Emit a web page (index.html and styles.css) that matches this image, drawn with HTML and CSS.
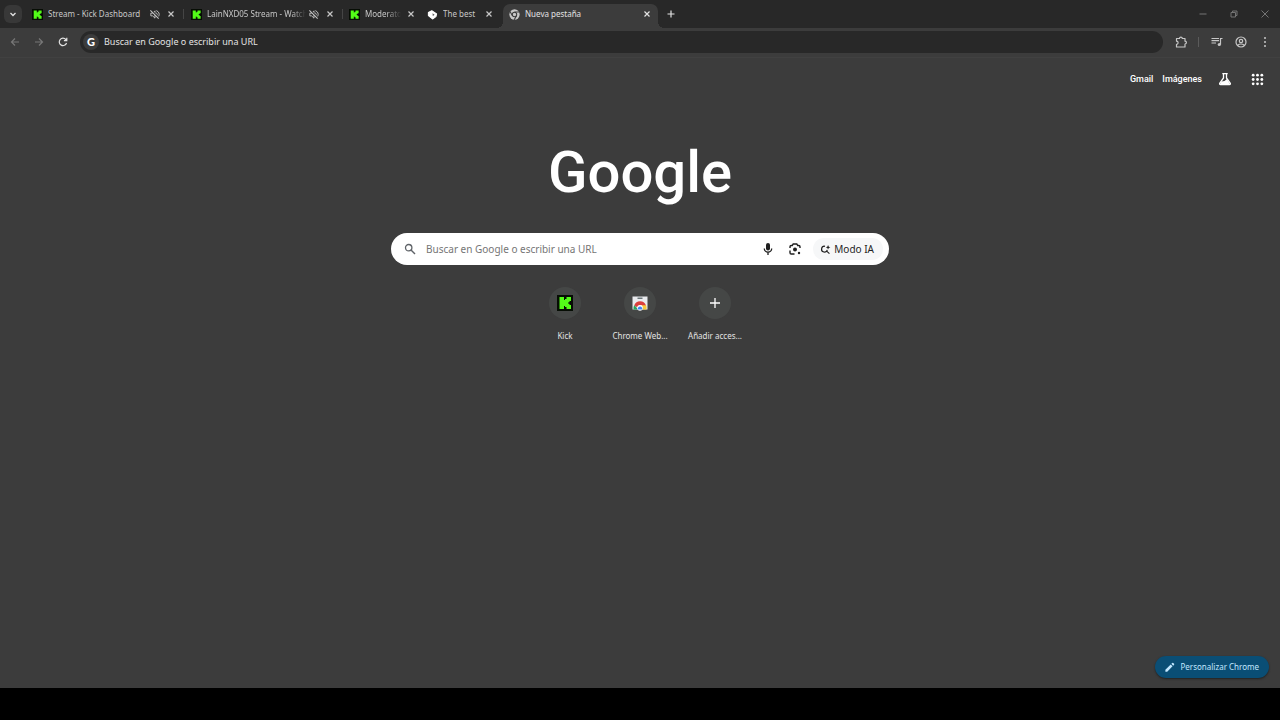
FILE: index.html
```html
<!DOCTYPE html>
<html lang="es">
<head>
<meta charset="utf-8">
<title>Nueva pestaña</title>
<link rel="stylesheet" href="styles.css">
</head>
<body>
<svg class="defs" aria-hidden="true">
  <symbol id="kick" viewBox="0 0 16 16"><path fill="#060d04" d="M0 0h16v16H0z"/><path fill="#53fc18" d="M2.500 2H7v3h1V4h1.500V2H14v4h-1.500v1.200H11.300v1.600h1.200V10H14v4H9.500v-2H8v-1H7v3H2.500z"/></symbol>
  <symbol id="close" viewBox="0 0 10 10"><path d="M2.500 2.500l5 5M7.500 2.500l-5 5" fill="none" stroke="currentColor" stroke-width="1.200"/></symbol>
  <symbol id="muted" viewBox="0 0 24 24"><path d="M4 9h4l5-5v16l-5-5H4z" fill="none" stroke="currentColor" stroke-width="2"/><path d="M16 8q4 4 0 8M16 3.500q9 4 5 13" fill="none" stroke="currentColor" stroke-width="2"/><path d="M4 2l18 18" stroke="#282828" stroke-width="3"/><path d="M3 3l18 18" stroke="currentColor" stroke-width="2.200"/></symbol>
</svg>
<header class="browser">
  <div class="tabstrip">
    <button class="tab-search" aria-label="Buscar pestañas"><svg viewBox="0 0 10 10"><path d="M2.500 4L5 6.500 7.500 4" fill="none" stroke="currentColor" stroke-width="1.300"/></svg></button>
    <div class="tab tab-wide"><svg class="fav"><use href="#kick"/></svg><span class="title">Stream - Kick Dashboard</span><svg class="muted"><use href="#muted"/></svg><button class="close" aria-label="Cerrar"><svg><use href="#close"/></svg></button></div>
    <div class="tab tab-wide"><svg class="fav"><use href="#kick"/></svg><span class="title fade">LainNXD05 Stream - Watch</span><svg class="muted"><use href="#muted"/></svg><button class="close" aria-label="Cerrar"><svg><use href="#close"/></svg></button></div>
    <div class="tab tab-small"><svg class="fav"><use href="#kick"/></svg><span class="title fade">Moderato</span><button class="close" aria-label="Cerrar"><svg><use href="#close"/></svg></button></div>
    <div class="tab tab-small last"><svg class="fav" viewBox="0 0 16 16"><path d="M7 2.500L14 7l-1 4-5 3.500L2 9.500V5z" fill="#fff" stroke="#fff" stroke-width="1.500" stroke-linejoin="round"/><path d="M8 6l3 2.500L8.500 10z" fill="#555"/></svg><span class="title">The best</span><button class="close" aria-label="Cerrar"><svg><use href="#close"/></svg></button></div>
    <div class="tab active"><svg class="fav" viewBox="0 0 16 16"><circle cx="8" cy="8" r="7.500" fill="#c8c8c8"/><circle cx="8" cy="8" r="3.200" fill="#c8c8c8" stroke="#3c3c3c" stroke-width="1.500"/><path d="M8 4.500h7M5 9.800L1.500 3.800M11 9.800L7.500 15.800" stroke="#3c3c3c" stroke-width="1.500"/></svg><span class="title">Nueva pestaña</span><button class="close" aria-label="Cerrar"><svg><use href="#close"/></svg></button></div>
    <button class="new-tab" aria-label="Nueva pestaña"><svg viewBox="0 0 10 10"><path d="M5 1.500v7M1.500 5h7" stroke="currentColor" stroke-width="1.200"/></svg></button>
    <div class="window">
      <button aria-label="Minimizar"><svg viewBox="0 0 10 10"><path d="M1.500 5h7" stroke="currentColor"/></svg></button>
      <button aria-label="Restaurar"><svg viewBox="0 0 10 10"><path d="M2 3.500h4.500V8H2zM3.500 3V2h4.500v4.500h-1" fill="none" stroke="currentColor"/></svg></button>
      <button aria-label="Cerrar ventana"><svg viewBox="0 0 10 10"><path d="M1.500 1.500l7 7m0-7l-7 7" stroke="currentColor"/></svg></button>
    </div>
  </div>
  <div class="toolbar">
    <button class="nav off" aria-label="Atrás"><svg viewBox="0 0 12 12"><path d="M10 6H2.500m3.500-3.500L2.500 6 6 9.500" fill="none" stroke="currentColor" stroke-width="1.200"/></svg></button>
    <button class="nav off" aria-label="Adelante"><svg viewBox="0 0 12 12"><path d="M2 6h7.500M6 2.500L9.500 6 6 9.500" fill="none" stroke="currentColor" stroke-width="1.200"/></svg></button>
    <button class="nav" aria-label="Recargar"><svg viewBox="0 0 12 12"><path d="M9.500 7A3.700 3.700 0 1 1 8.800 3.500L9.800 4.500M9.800 1.800v2.900H6.900" fill="none" stroke="currentColor" stroke-width="1.200"/></svg></button>
    <label class="omnibox"><span class="g-badge">G</span><input type="text" aria-label="Barra de direcciones" placeholder="Buscar en Google o escribir una URL"></label>
    <div class="tools">
      <button aria-label="Extensiones"><svg viewBox="0 0 14 14"><path d="M2.500 3.500h3a1.400 1.400 0 0 1 2.800 0H11v2.700a1.400 1.400 0 0 1 0 2.800V12H2.500V9.400a1.600 1.600 0 0 0 0-3.200z" fill="none" stroke="currentColor" stroke-width="1.200" stroke-linejoin="round"/></svg></button>
      <span class="rule"></span>
      <button aria-label="Controlar multimedia"><svg viewBox="0 0 14 14"><path d="M1.500 3.500h7.500M1.500 5.700h7.500M1.500 8h4.500M12.500 3.500h-2v6" fill="none" stroke="currentColor" stroke-width="1.200"/><circle cx="9.300" cy="9.500" r="1.600" fill="currentColor"/></svg></button>
      <button aria-label="Perfil"><svg viewBox="0 0 14 14"><g fill="none" stroke="currentColor" stroke-width="1.200"><circle cx="7" cy="7" r="5"/><circle cx="7" cy="6" r="1.700"/><path d="M3.600 10.300q3.400-2.600 6.800 0"/></g></svg></button>
      <button aria-label="Menú"><svg viewBox="0 0 14 14" fill="currentColor"><circle cx="7" cy="3" r="1"/><circle cx="7" cy="7" r="1"/><circle cx="7" cy="11" r="1"/></svg></button>
    </div>
  </div>
</header>
<main class="page">
  <nav class="links">
    <a href="#">Gmail</a><a href="#">Imágenes</a>
    <button class="labs" aria-label="Labs"><svg viewBox="0 0 14 14"><path d="M4.300 1.700h5.400M5.500 2v4L1.700 11.300Q1.300 12.500 2.500 12.500h9Q12.700 12.500 12.300 11.300L8.500 6V2" fill="none" stroke="currentColor" stroke-width="1.300"/><path d="M3.500 9.500L6.500 9l2.500-2 2.800 5H2.200z" fill="currentColor"/></svg></button>
    <button class="apps" aria-label="Aplicaciones"><svg viewBox="0 0 12 12" fill="currentColor"><circle cx="2" cy="2" r="1.300"/><circle cx="6" cy="2" r="1.300"/><circle cx="10" cy="2" r="1.300"/><circle cx="2" cy="6" r="1.300"/><circle cx="6" cy="6" r="1.300"/><circle cx="10" cy="6" r="1.300"/><circle cx="2" cy="10" r="1.300"/><circle cx="6" cy="10" r="1.300"/><circle cx="10" cy="10" r="1.300"/></svg></button>
  </nav>
  <h1 class="logo">Google</h1>
  <form class="search">
    <svg class="lens" viewBox="0 0 12 12"><circle cx="4.700" cy="4.700" r="3.200" fill="none" stroke="currentColor" stroke-width="1.300"/><path d="M7 7l4 4" stroke="currentColor" stroke-width="1.500"/></svg>
    <input type="text" aria-label="Buscar" placeholder="Buscar en Google o escribir una URL">
    <button type="button" class="icon" aria-label="Buscar por voz"><svg viewBox="0 0 14 14"><rect x="5" y="1" width="4" height="7.500" rx="2" fill="currentColor"/><path d="M3.300 6.500a3.700 3.700 0 0 0 7.400 0M7 10.500V13" fill="none" stroke="currentColor" stroke-width="1.300"/></svg></button>
    <button type="button" class="icon" aria-label="Buscar por imagen"><svg viewBox="0 0 14 14"><path d="M2 6V4.800Q2 3.500 3.200 3.500H4.300L5.200 2h3.600L9.700 3.500h1.100Q12 3.500 12 4.800V6M2 8.500v2.200Q2 12 3.200 12h3.300" fill="none" stroke="currentColor" stroke-width="1.400"/><circle cx="7" cy="7.500" r="2" fill="currentColor"/><circle cx="11" cy="11" r="1.200" fill="currentColor"/></svg></button>
    <button type="button" class="ai"><svg viewBox="0 0 12 12"><path d="M5.500 2.500A3.200 3.200 0 1 0 8 6.500M7 7.500L10.300 10.500" fill="none" stroke="currentColor" stroke-width="1.300"/><path d="M8.800 1q.3 2.300 2.500 2.500-2.200.3-2.500 2.500-.3-2.200-2.500-2.500 2.200-.2 2.500-2.500z" fill="currentColor"/></svg>Modo IA</button>
  </form>
  <div class="shortcuts">
    <a href="#"><span class="disc"><svg class="site"><use href="#kick"/></svg></span><span>Kick</span></a>
    <a href="#"><span class="disc"><svg class="site" viewBox="0 0 16 16"><path fill="#e9ebee" d="M.5 1.500h15v13H.5z"/><path fill="#697578" d="M5.500 2.500h5v1.500h-5z"/><path fill="#28a35a" d="M2.500 10L6 14.500H1.500q-.5-2.500 1-4.500z"/><path fill="#f8c93c" d="M10 10h4q1 2.500.5 4.500H9z"/><path fill="#db3f3d" d="M2.300 10.300a6.200 6.200 0 0 1 11.600 0H8l-3 2z"/><circle cx="8" cy="12.800" r="2.900" fill="#fff"/><path fill="#4285f4" d="M5.800 14.500a2.300 2.300 0 1 1 4.400 0z"/></svg></span><span>Chrome Web...</span></a>
    <button><span class="disc"><svg class="add" viewBox="0 0 12 12"><path d="M6 1v10M1 6h10" stroke="#fff" stroke-width="1.300"/></svg></span><span>Añadir acces...</span></button>
  </div>
  <button class="customize"><svg viewBox="0 0 12 12"><path fill="currentColor" d="M1.500 8.500L7.300 2.700l2 2-5.800 5.800h-2zM8 2l1-1q.6-.4 1 0l1 1q.4.4 0 1l-1 1z"/></svg>Personalizar Chrome</button>
</main>
<footer class="taskbar"></footer>
</body>
</html>
```
FILE: styles.css
```css
* { box-sizing: border-box; }
body { margin: 0; min-height: 100vh; display: flex; flex-direction: column; background: #3c3c3c; color: #e3e3e3; font: 8px/14px "Noto Sans", "Open Sans", sans-serif; }
button { border: 0; padding: 0; background: none; color: inherit; font: inherit; display: flex; align-items: center; justify-content: center; }
input { border: 0; outline: 0; padding: 0; background: none; font: inherit; color: inherit; flex: 1; min-width: 0; }
a { color: inherit; text-decoration: none; }
svg { display: block; flex: none; }
.defs { position: absolute; width: 0; height: 0; }
.tabstrip { height: 28px; display: flex; align-items: center; background: #282828; padding-left: 4px; }
.tab-search { width: 18px; height: 18px; border-radius: 6px; background: #383838; margin-right: 3px; }
.tab-search svg { width: 10px; height: 10px; }
.tab { height: 24px; display: flex; align-items: center; padding: 0 8px 0 7px; color: #c7c7c7; position: relative; }
.tab-wide { width: 159px; }
.tab-small { width: 78px; padding: 0 5px 0 6px; }
.tab-wide::after { content: ""; position: absolute; right: 0; top: 7px; width: 1px; height: 10px; background: #454545; }
.fav { width: 11px; height: 11px; margin-right: 5px; }
.title { flex: 1; min-width: 0; overflow: hidden; white-space: nowrap; }
.fade { mask-image: linear-gradient(to right, #000 calc(100% - 14px), transparent); }
.muted { width: 11px; height: 11px; margin: 0 6px 0 2px; }
.close { width: 10px; height: 10px; }
.close svg { width: 10px; height: 10px; }
.tab-small .title { margin-right: 5px; }
.last { margin-right: 4px; }
.active { width: 155px; height: 24px; align-self: flex-end; padding: 0 6px 4px; background: #3c3c3c; border-radius: 7px 7px 0 0; color: #e3e3e3; }
.active::before, .active::after { content: ""; position: absolute; bottom: 0; width: 6px; height: 6px; }
.active::before { left: -6px; background: radial-gradient(circle at 0 0, transparent 6px, #3c3c3c 6px); }
.active::after { right: -6px; background: radial-gradient(circle at 100% 0, transparent 6px, #3c3c3c 6px); }
.new-tab { width: 20px; height: 20px; margin-left: 3px; }
.new-tab svg { width: 10px; height: 10px; }
.window { display: flex; margin-left: auto; color: #747474; }
.window button { width: 31px; height: 28px; }
.window svg { width: 10px; height: 10px; }
.toolbar { height: 30px; display: flex; align-items: center; padding: 0 3px 2px; background: #3c3c3c; border-bottom: 1px solid #414141; }
.nav { width: 24px; height: 24px; }
.nav svg { width: 12px; height: 12px; }
.off { color: #777; }
.omnibox { flex: 1; height: 22px; display: flex; align-items: center; gap: 5px; margin: 0 10px 0 5px; padding-left: 3px; border-radius: 11px; background: #282828; font-size: 9px; }
.omnibox input::placeholder { color: #e3e3e3; opacity: 1; }
.g-badge { width: 16px; height: 16px; border-radius: 50%; background: #3c3c3c; color: #fff; font: 900 11px/16px Lato, sans-serif; text-align: center; }
.tools { display: flex; align-items: center; color: #c7c7c7; }
.tools button { width: 24px; height: 24px; }
.tools button:first-child { width: 16px; }
.tools svg { width: 14px; height: 14px; }
.rule { width: 1px; height: 10px; margin: 0 6px 0 9px; background: #5b5b5b; }
.page { flex: 1; display: flex; flex-direction: column; align-items: center; position: relative; }
.links { align-self: stretch; height: 42px; display: flex; align-items: center; justify-content: flex-end; padding-right: 16px; color: #fff; font: 500 9px/14px Roboto, sans-serif; }
.links a { margin-right: 9px; }
.labs { margin: 0 19px 0 7px; }
.links svg { width: 14px; height: 14px; }
.links .apps svg { width: 13px; height: 13px; }
.logo { margin: 32px 0 0; color: #fff; font: 500 58px/80px Roboto, sans-serif; }
.search { width: 498px; max-width: calc(100% - 32px); height: 32px; margin-top: 21px; display: flex; align-items: center; border-radius: 16px; background: #fff; color: #1f1f1f; padding: 0 6px 0 13px; font: 10px/14px "Noto Sans", sans-serif; }
.lens { width: 12px; height: 12px; margin-right: 10px; color: #5f6368; }
.search input::placeholder { color: #757575; opacity: 1; }
.icon { margin-right: 13px; }
.icon svg { width: 14px; height: 14px; }
.ai { height: 22px; padding: 0 9px 0 7px; gap: 3px; border-radius: 11px; background: #f6f7f8; margin-left: -2px; }
.ai svg { width: 11px; height: 11px; }
.shortcuts { display: flex; margin-top: 22px; }
.shortcuts > * { width: 75px; display: flex; flex-direction: column; align-items: center; gap: 10px; white-space: nowrap; }
.disc { width: 32px; height: 32px; border-radius: 50%; background: #454746; display: flex; align-items: center; justify-content: center; }
.site { width: 16px; height: 16px; }
.add { width: 12px; height: 12px; }
.customize { position: absolute; right: 11px; bottom: 10px; height: 22px; padding: 0 10px 0 9px; gap: 6px; border-radius: 11px; background: #0a4e75; color: #c2e7ff; box-shadow: 0 1px 2px #222; }
.customize svg { width: 11px; height: 11px; }
.taskbar { height: 32px; background: #000; }
```
